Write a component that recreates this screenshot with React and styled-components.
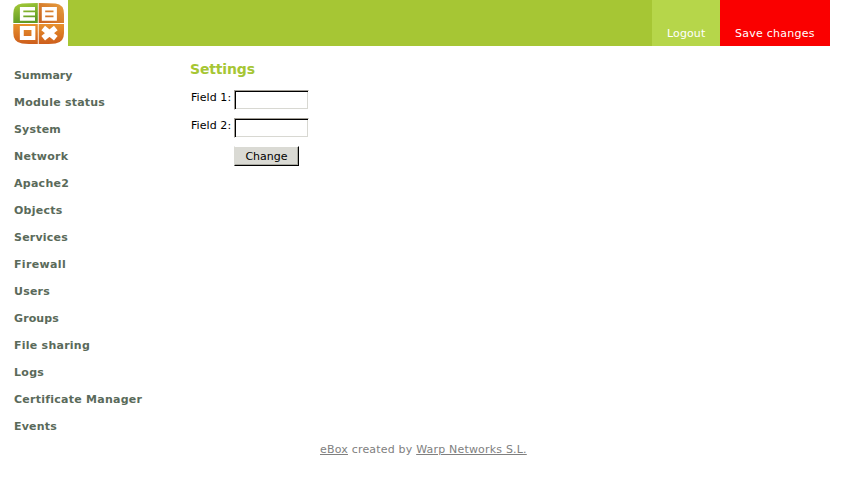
import React from 'react';
import styled, { createGlobalStyle } from 'styled-components';

const GlobalStyle = createGlobalStyle`
  * { box-sizing: border-box; }
  body { margin: 0; background: #fff; font: 11px/13px "DejaVu Sans", sans-serif; color: #000; }
`;

const Page = styled.div`
  width: 862px;
  height: 480px;
  overflow: hidden;
`;
const Header = styled.header`
  display: flex;
  height: 46px;
  width: 830px;
`;
const LogoArea = styled.div`
  width: 68px;
  height: 46px;
  svg { display: block; }
`;
const Banner = styled.div`
  flex: 1;
  background: #a6c634;
`;
const HeaderAction = styled.a`
  width: ${(p) => p.$width}px;
  padding: 27px 0 0 15px;
  background: ${(p) => p.$bg};
  color: #fff;
  white-space: nowrap;
  letter-spacing: ${(p) => p.$track || 0}px;
`;
const Columns = styled.div`
  display: flex;
  height: 397px;
`;
const Menu = styled.ul`
  list-style: none;
  width: 190px;
  margin: 0;
  padding: 16px 0 0 14px;
`;
const MenuItem = styled.li`
  height: 27px;
  line-height: 27px;
  font-weight: bold;
  color: #5a6a5a;
  white-space: nowrap;
  letter-spacing: ${(p) => p.$track || 0}px;
`;
const Content = styled.main`
  flex: 1;
`;
const Title = styled.h1`
  margin: 15px 0 0;
  font-size: 14px;
  line-height: 16px;
  letter-spacing: -0.15px;
  color: #a6c634;
`;
const Form = styled.form`
  display: grid;
  grid-template-columns: 43px 75px;
  grid-auto-rows: 28px;
  align-items: start;
  column-gap: 1px;
  margin-top: 13px;
`;
const Label = styled.label`
  padding: 1px 0 0 1px;
  white-space: nowrap;
  letter-spacing: 0.08px;
`;
const Input = styled.input`
  width: 75px;
  height: 20px;
  padding: 0 2px;
  font: inherit;
  outline: none;
  background: #fff;
  border: 1px solid;
  border-color: #a09c94 #fff #fff #a09c94;
  box-shadow: inset 1px 1px 0 #000, inset -1px -1px 0 #d8d8d2;
`;
const Button = styled.button`
  grid-column: 2;
  width: 65px;
  height: 20px;
  padding: 0;
  font: inherit;
  color: #000;
  background: #dadad4;
  border: 1px solid;
  border-color: #fff #000 #000 #dadad4;
  box-shadow: inset -1px -1px 0 #a8a8a0;
`;
const Footer = styled.footer`
  padding-left: 320px;
  color: #808080;
  white-space: nowrap;
  letter-spacing: 0.19px;
`;
const FooterLink = styled.a`
  text-decoration: underline;
`;

const Logo = () => (
  <svg width="68" height="46" viewBox="0 0 68 46">
    <defs>
      <linearGradient id="leaf" x1="0" y1="0" x2="0.3" y2="1">
        <stop offset="0" stopColor="#a8cc3a" />
        <stop offset="1" stopColor="#5f9a24" />
      </linearGradient>
      <linearGradient id="amber" x1="1" y1="0" x2="0" y2="1">
        <stop offset="0" stopColor="#e8a040" />
        <stop offset="1" stopColor="#c85f1c" />
      </linearGradient>
      <linearGradient id="rust" x1="0" y1="0" x2="0" y2="1">
        <stop offset="0" stopColor="#e8912c" />
        <stop offset="1" stopColor="#cd5e1c" />
      </linearGradient>
    </defs>
    <path d="M37.8 3V23H13.3V14Q13.3 4.5 22 3.6Q28 3 37.8 3Z" fill="url(#leaf)" />
    <path d="M38.7 3Q50 3 55.5 3.6Q64 4.5 64 14V23H38.7Z" fill="url(#amber)" />
    <path d="M13.3 24H37.8V44Q28 44 22 43.4Q13.3 42.5 13.3 33Z" fill="url(#rust)" />
    <path d="M38.7 24H64V33Q64 42.5 55.5 43.4Q50 44 38.7 44Z" fill="url(#rust)" />
    <g fill="none" stroke="#fff" strokeWidth="3.9">
      <path d="M35 8.8H21.6V19H35M21.6 13.9H35" strokeWidth="3.4" />
      <path d="M43.5 8.8H55.2V19H43.5ZM43.5 13.9H55" strokeWidth="3.4" />
      <path d="M21.8 28H33.4V38H21.8Z" />
      <path d="M43.2 28L55.8 38.2M55.8 28L43.2 38.2" strokeWidth="5.8" />
    </g>
  </svg>
);

const items = [
  ['Summary', -0.05],
  ['Module status', 0.23],
  ['System', 0.2],
  ['Network', 0.27],
  ['Apache2', 0.27],
  ['Objects', 0.27],
  ['Services', 0.22],
  ['Firewall', 0.35],
  ['Users', 0.22],
  ['Groups', 0.1],
  ['File sharing', 0.25],
  ['Logs', 0.3],
  ['Certificate Manager', 0.25],
  ['Events', 0.2],
];

export default function App() {
  return (
    <Page>
      <GlobalStyle />
      <Header>
        <LogoArea><Logo /></LogoArea>
        <Banner />
        <HeaderAction $width={68} $track={0.12} $bg="#b6d64a">Logout</HeaderAction>
        <HeaderAction $width={110} $track={0.25} $bg="#fa0000">Save changes</HeaderAction>
      </Header>
      <Columns>
        <Menu>
          {items.map(([label, track]) => <MenuItem key={label} $track={track}>{label}</MenuItem>)}
        </Menu>
        <Content>
          <Title>Settings</Title>
          <Form onSubmit={(e) => e.preventDefault()}>
            <Label htmlFor="field1">Field 1:</Label>
            <Input id="field1" />
            <Label htmlFor="field2">Field 2:</Label>
            <Input id="field2" />
            <Button>Change</Button>
          </Form>
        </Content>
      </Columns>
      <Footer>
        <FooterLink>eBox</FooterLink> created by <FooterLink>Warp Networks S.L.</FooterLink>
      </Footer>
    </Page>
  );
}
